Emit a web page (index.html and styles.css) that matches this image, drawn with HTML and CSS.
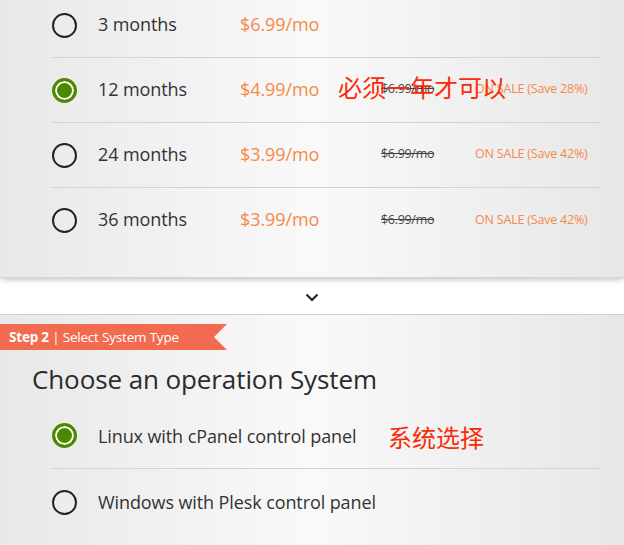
FILE: index.html
```html
<!DOCTYPE html>
<html>
<head>
<meta charset="utf-8">
<link rel="stylesheet" href="styles.css">
</head>
<body>
<section class="plans">
  <div class="list">
    <div class="row">
      <span class="radio"></span>
      <span class="label">3 months</span>
      <span class="price">$6.99/mo</span>
      <span class="old"></span>
      <span class="sale"></span>
    </div>
    <div class="row">
      <span class="radio checked"></span>
      <span class="label">12 months</span>
      <span class="price">$4.99/mo</span>
      <span class="old">$6.99/mo</span>
      <span class="sale">ON SALE (Save 28%)</span>
      <span class="note note-year">必须一年才可以</span>
    </div>
    <div class="row">
      <span class="radio"></span>
      <span class="label">24 months</span>
      <span class="price">$3.99/mo</span>
      <span class="old">$6.99/mo</span>
      <span class="sale">ON SALE (Save 42%)</span>
    </div>
    <div class="row">
      <span class="radio"></span>
      <span class="label">36 months</span>
      <span class="price">$3.99/mo</span>
      <span class="old">$6.99/mo</span>
      <span class="sale">ON SALE (Save 42%)</span>
    </div>
  </div>
</section>
<div class="toggle">
  <svg width="14" height="9" viewBox="0 0 14 9"><path d="M1.5 1.5 L7 7 L12.5 1.5" fill="none" stroke="#1d2433" stroke-width="2.2"/></svg>
</div>
<section class="system">
  <div class="banner"><b>Step 2</b> | Select System Type</div>
  <h2 class="title">Choose an operation System</h2>
  <div class="oslist">
    <div class="osrow">
      <span class="radio checked"></span>
      <span class="label">Linux with cPanel control panel</span>
      <span class="note note-os">系统选择</span>
    </div>
    <div class="osrow">
      <span class="radio"></span>
      <span class="label">Windows with Plesk control panel</span>
    </div>
  </div>
</section>
</body>
</html>
```
FILE: styles.css
```css
* { box-sizing: border-box; }
html, body { margin: 0; padding: 0; }
body {
  width: 624px;
  height: 545px;
  overflow: hidden;
  font-family: "Open Sans", "Noto Sans", sans-serif;
  color: #333;
  background: #fff;
}
.plans, .system {
  background: linear-gradient(to right, #e8e8e8 0%, #f9f9f9 50%, #e7e7e7 100%);
}
.plans {
  height: 278px;
  border-bottom: 1px solid #d4d4d4;
  box-shadow: 0 3px 5px -1px rgba(0,0,0,0.22);
  position: relative;
  z-index: 1;
  overflow: hidden;
}
.list {
  margin: -7px 24px 0 52px;
}
.row {
  position: relative;
  display: grid;
  grid-template-columns: 46px 142px 141px 94px 1fr;
  align-items: center;
  height: 65px;
  border-bottom: 1px solid #d3d3d3;
}
.row:last-child { border-bottom: none; }
.row .label, .row .price, .row .old, .row .sale { margin-bottom: 3px; }
.radio {
  width: 25px;
  height: 25px;
  border-radius: 50%;
  border: 2.5px solid #222;
  display: inline-block;
}
.radio.checked {
  border: 3px solid #4b8a00;
  background: #4b8a00;
  box-shadow: inset 0 0 0 2px #fff;
}
.label {
  font-size: 18px;
  color: #333;
  letter-spacing: -0.1px;
}
.price {
  font-size: 18px;
  color: #f5894a;
  letter-spacing: -0.1px;
}
.old {
  font-size: 12.5px;
  color: #444;
  text-decoration: line-through;
  letter-spacing: -0.3px;
}
.sale {
  font-size: 12.5px;
  color: #f5894a;
  letter-spacing: -0.2px;
}
.note {
  position: absolute;
  font-family: "Noto Sans CJK SC", sans-serif;
  font-size: 24px;
  color: #fb2a06;
  line-height: 1;
  white-space: nowrap;
}
.note-year { left: 286px; top: 17px; }
.note-os { left: 336px; top: 22px; }
.toggle {
  height: 37px;
  background: #fff;
  border-bottom: 1px solid #cfcfcf;
  display: flex;
  justify-content: center;
  align-items: center;
  padding-top: 2px;
}
.system {
  height: 230px;
  padding-top: 9px;
}
.banner {
  width: 227px;
  height: 26px;
  background: #f26b50;
  color: #fff;
  font-size: 13.5px;
  line-height: 26px;
  padding-left: 9px;
  clip-path: polygon(0 0, 100% 0, 214px 50%, 100% 100%, 0 100%);
  letter-spacing: -0.2px;
}
.banner b { font-weight: 700; }
.title {
  margin: 11px 0 0 32px;
  font-size: 26px;
  font-weight: 400;
  color: #2b2b2b;
  line-height: 36px;
  letter-spacing: -0.1px;
}
.oslist {
  margin: 6px 24px 0 52px;
}
.osrow {
  position: relative;
  display: grid;
  grid-template-columns: 46px 1fr;
  align-items: center;
  height: 66px;
  border-bottom: 1px solid #d3d3d3;
}
.osrow:last-child { border-bottom: none; }
```
